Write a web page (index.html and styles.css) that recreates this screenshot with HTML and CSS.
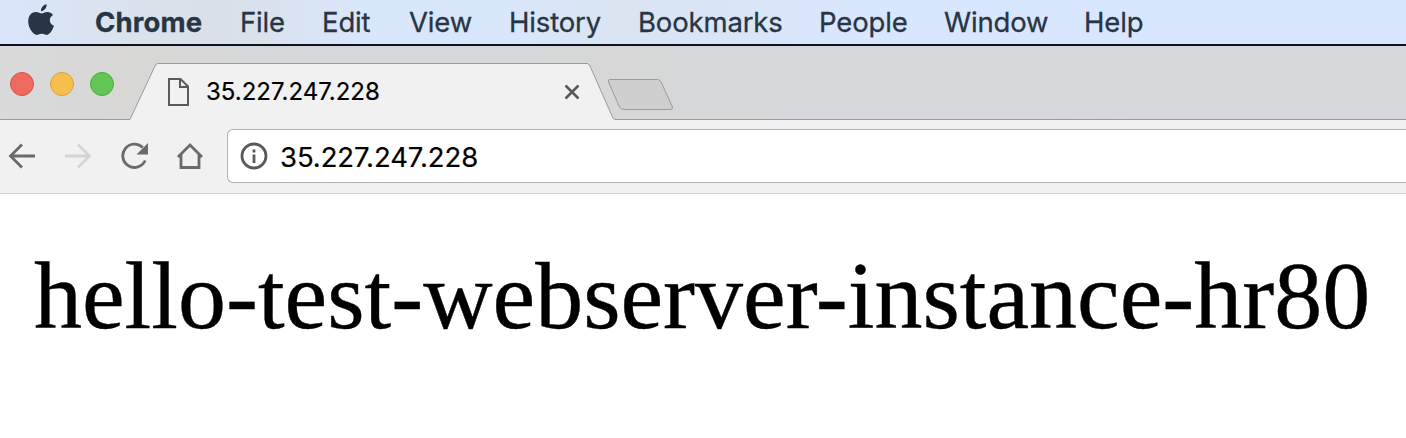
FILE: index.html
```html
<!DOCTYPE html>
<html lang="en">
<head>
<meta charset="utf-8">
<title>35.227.247.228</title>
<link rel="stylesheet" href="styles.css">
</head>
<body>
<nav class="menubar">
  <svg class="apple" width="27" height="33" viewBox="0 0 27 33"><path d="M18.6 0.3C19 3.6 16.3 7.2 13 7.2C12.6 3.9 15.4 0.8 18.6 0.3ZM13.7 9.6C15 9.6 16.7 8 19.3 8C21.6 8 23.7 9.2 25 11C20.4 13.6 21 20 26 21.8C25 24.8 22 30.9 18.9 30.9C16.9 30.9 16.1 29.7 13.8 29.7C11.4 29.7 10.5 30.9 8.7 30.9C5.2 30.9 0.2 24 0.2 17.3C0.2 11.2 4.1 8 7.8 8C10.3 8 12.3 9.6 13.7 9.6Z"/></svg>
  <span class="app">Chrome</span>
  <span>File</span>
  <span>Edit</span>
  <span>View</span>
  <span>History</span>
  <span>Bookmarks</span>
  <span>People</span>
  <span>Window</span>
  <span>Help</span>
</nav>
<header class="tabstrip">
  <div class="lights"><i class="red"></i><i class="yellow"></i><i class="green"></i></div>
  <div class="tab">
    <svg class="tab-shape" width="486" height="57" viewBox="0 0 486 57"><path class="tab-fill" d="M0 56.5L25 3Q26 .5 28 .5H457Q459 .5 460 3L482 53Q483.500 56.500 485 56.500V57H0Z"/><path class="tab-line" d="M0 56.500L25 3Q26 .5 28 .5H457Q459 .5 460 3L482 53Q483.500 56.500 485 56.500"/></svg>
    <svg class="page-icon" width="22" height="28" viewBox="0 0 22 28"><path d="M1 1H12.500L20 8.500V27H1ZM12 1V9H20"/></svg>
    <span class="tab-title">35.227.247.228</span>
    <svg class="close" width="16" height="16" viewBox="0 0 16 16"><path d="M1.500 1.500L14.500 14.500M14.500 1.500L1.500 14.500"/></svg>
  </div>
  <svg class="new-tab" width="68" height="33" viewBox="0 0 68 33"><path d="M3 1.500H50.500Q53 1.500 54 4L65.500 29Q66 31.500 63 31.500H17Q14 31.500 12.500 29L1.500 4Q.5 1.500 3 1.500Z"/></svg>
</header>
<div class="toolbar">
  <svg class="nav" width="28" height="28" viewBox="0 0 28 28"><path d="M27 14H3M14 2.500L2.500 14L14 25.500"/></svg>
  <svg class="nav disabled" width="28" height="28" viewBox="0 0 28 28"><path d="M1 14H25M14 2.500L25.500 14L14 25.500"/></svg>
  <svg class="nav" width="28" height="28" viewBox="0 0 28 28"><path d="M22.800 5.500A11.700 11.700 0 1 0 25.200 18.500"/><path class="solid" d="M28 1V12.500H16.500Z"/></svg>
  <svg class="nav" width="28" height="28" viewBox="0 0 28 28"><path d="M2 15L14 3L26 15M5 12.500V25.500H23V12.500"/></svg>
  <div class="address">
    <svg class="info" width="28" height="28" viewBox="0 0 28 28"><circle cx="14" cy="14" r="12"/><path d="M14 12.500V21M14 7.500V10.500"/></svg>
    <span class="url">35.227.247.228</span>
  </div>
</div>
<main class="page">hello-test-webserver-instance-hr80</main>
</body>
</html>
```
FILE: styles.css
```css
* { box-sizing: border-box; }
body { margin: 0; width: 1406px; height: 438px; overflow: hidden; background: #fff; font-family: Inter, "Liberation Sans", sans-serif; }
svg { display: block; fill: none; }
.menubar {
  display: grid;
  grid-template-columns: 67px 145px 82px 87px 100px 129px 181px 125px 140px 100px;
  height: 46px; padding-left: 28px;
  border-bottom: 2px solid #0c1424;
  background: linear-gradient(90deg, #d9e6fb 0, #dae4f0 85px, #d9e0e7 220px, #d9e7fb 360px, #d9e7fb 500px, #dae5f1 620px, #d9e6f8 760px, #d9e7fe 850px);
  color: #283545; font-size: 27.5px; line-height: 44px; letter-spacing: -.15px; white-space: nowrap;
  -webkit-text-stroke: .3px #283545;
}
.apple { margin-top: 4px; fill: #283545; }
.app { font-weight: 700; letter-spacing: .15px; }
.tabstrip {
  display: flex; height: 74px; border-bottom: 1px solid #999b9d;
  background: linear-gradient(90deg, #d9dadb 0, #d8d7d6 130px, #d5d7da 350px, #d7d7d7 620px, #d5d7da 780px, #d7d8db 100%);
}
.lights { display: flex; gap: 16px; width: 130px; padding: 26px 0 0 10px; }
.lights i { width: 24px; height: 24px; border-radius: 50%; border: 1px solid; }
.lights .red { background: #ee6a5f; border-color: #d95349; }
.lights .yellow { background: #f5bf4f; border-color: #dba03b; }
.lights .green { background: #61c654; border-color: #4bad40; }
.tab { position: relative; display: flex; width: 477px; height: 57px; margin-top: 17px; padding-left: 38px; }
.tab-shape { position: absolute; left: 0; top: 0; }
.tab-fill { fill: #f1f1f1; }
.tab-line { stroke: #999b9d; }
.page-icon { position: relative; flex: none; margin-top: 15px; stroke: #5a5a5a; stroke-width: 2; }
.tab-title { position: relative; flex: none; width: 357px; margin-left: 16px; color: #000; font-size: 24px; line-height: 58px; -webkit-text-stroke: .2px #000; }
.close { position: relative; flex: none; margin: 21px 0 0 1px; stroke: #5a5a5a; stroke-width: 2.6; }
.new-tab { flex: none; margin-top: 32px; fill: #cfcfcf; stroke: #999b9d; }
.toolbar { display: flex; align-items: flex-start; gap: 28px; height: 74px; padding: 9px 0 0 8px; background: #f1f1f1; border-bottom: 1px solid #d0d0d0; }
.nav { flex: none; margin-top: 13px; stroke: #6a6a6a; stroke-width: 2.8; }
.disabled { stroke: #d5d5d5; }
.nav .solid { fill: #6a6a6a; stroke: none; }
.address { display: flex; flex: 1; align-items: center; gap: 12px; height: 54px; margin-left: -5px; padding-left: 12px; border: 1px solid #b3b3b3; border-right: 0; border-radius: 6px 0 0 6px; background: #fff; color: #000; font-size: 27.5px; }
.url { padding-top: 2px; letter-spacing: -.08px; -webkit-text-stroke: .2px #000; }
.info { stroke: #5a5a5a; stroke-width: 2.8; }
.page { padding: 47px 0 0 34px; color: #000; font: 96px/110px "Liberation Serif", serif; white-space: nowrap; -webkit-text-stroke: .4px #000; }
```
